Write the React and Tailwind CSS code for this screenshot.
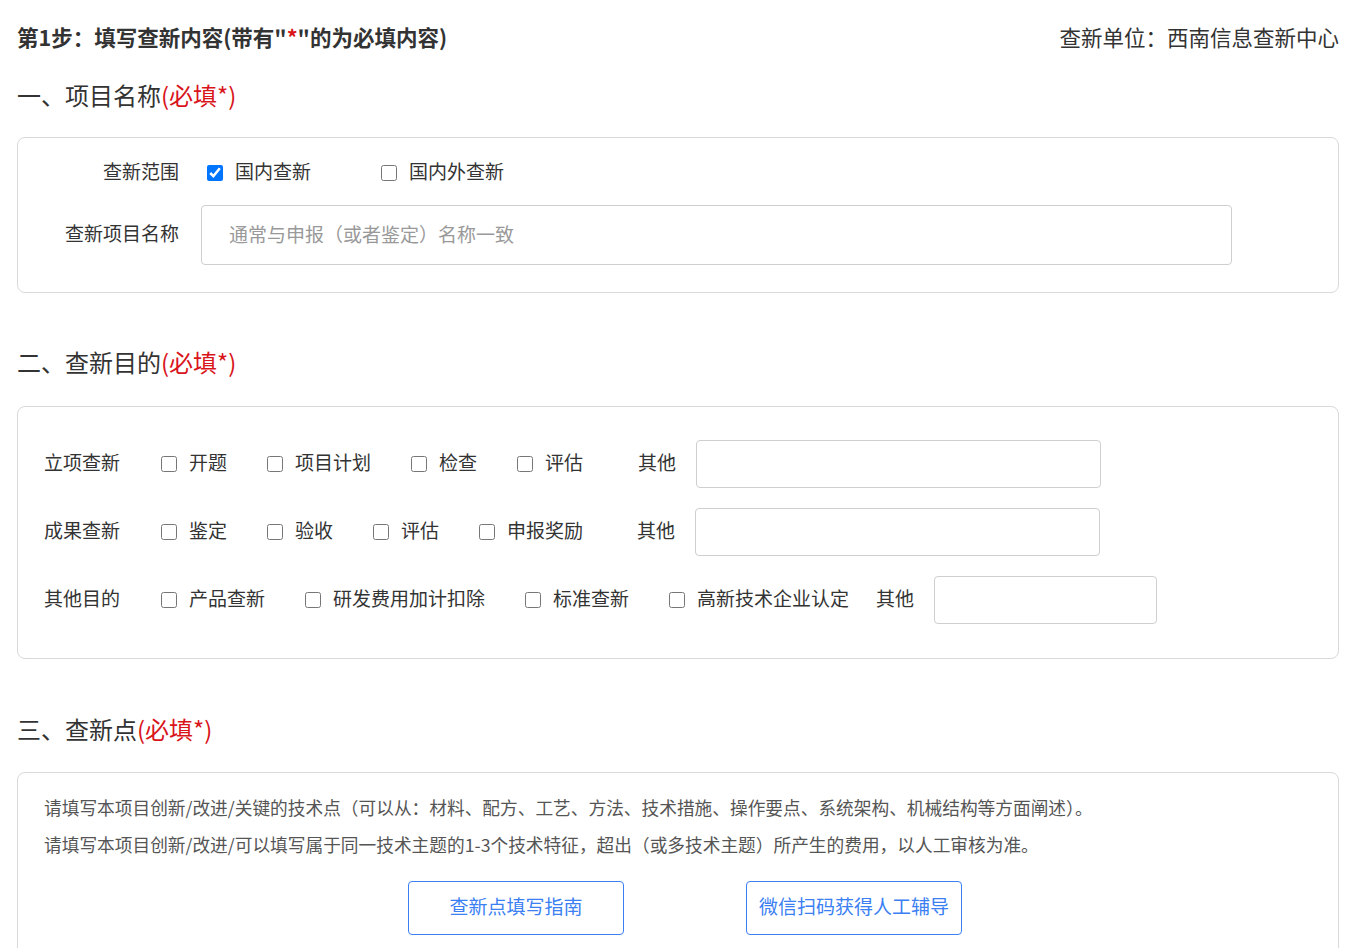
const font = { fontFamily: '"Noto Sans CJK SC", "Noto Sans", sans-serif' }

const Check = ({ label, checked, className = '' }) => (
  <label className={`flex items-center ${className}`}>
    <input type="checkbox" defaultChecked={checked} className="w-4 h-4 accent-[#0075ff]" />
    <span className="ml-[12px] pb-[3px] whitespace-nowrap">{label}</span>
  </label>
)

const SectionTitle = ({ children, className = '' }) => (
  <div className={`h-[36px] flex items-center pb-[3px] text-[24px] text-[#333] ${className}`}>
    {children}
    <span className="text-[#d9141a]">(必填*)</span>
  </div>
)

const purposeRows = [
  { label: '立项查新', items: ['开题', '项目计划', '检查', '评估'], otherGap: 'ml-[55px]', inputW: 'w-[405px]' },
  { label: '成果查新', items: ['鉴定', '验收', '评估', '申报奖励'], otherGap: 'ml-[54px]', inputW: 'w-[405px]' },
  { label: '其他目的', items: ['产品查新', '研发费用加计扣除', '标准查新', '高新技术企业认定'], otherGap: 'ml-[27px]', inputW: 'w-[223px]' },
]

export default function App() {
  return (
    <div className="min-h-[948px] bg-white pl-[17px] pr-[13px] pb-10 text-[#333]" style={font}>
      {/* header */}
      <div className="mt-[22px] h-[30px] flex items-center justify-between">
        <div className="text-[21.5px] font-bold text-[#333]">
          第1步：填写查新内容(带有"<span className="text-[#d9141a]">*</span>"的为必填内容)
        </div>
        <div className="text-[21.5px] text-[#333]">查新单位：西南信息查新中心</div>
      </div>

      <SectionTitle className="mt-[26px]">一、项目名称</SectionTitle>
      <div className="mt-[23px] border border-[#d9d9d9] rounded-[8px] pt-[15px] pb-[27px] text-[19px]">
        <div className="h-[40px] flex items-center">
          <div className="w-[161px] text-right pb-[3px]">查新范围</div>
          <Check label="国内查新" checked className="ml-[28px]" />
          <Check label="国内外查新" className="ml-[70px]" />
        </div>
        <div className="mt-[12px] flex items-center">
          <div className="w-[161px] text-right pb-[3px]">查新项目名称</div>
          <input
            type="text"
            placeholder="通常与申报（或者鉴定）名称一致"
            className="ml-[22px] w-[1031px] h-[60px] border border-[#cfcfcf] rounded-[4px] px-[27px] pb-[3px] text-[19px] outline-none placeholder:text-[#999]"
          />
        </div>
      </div>

      <SectionTitle className="mt-[52px]">二、查新目的</SectionTitle>
      <div className="mt-[25px] border border-[#d9d9d9] rounded-[8px] pt-[33px] pb-[34px] pl-[26px] text-[19px]">
        <div className="flex flex-col gap-[20px]">
          {purposeRows.map((row) => (
            <div key={row.label} className="flex items-center">
              <div className="w-[117px] pb-[3px]">{row.label}</div>
              <div className="flex items-center gap-[40px]">
                {row.items.map((it) => (
                  <Check key={it} label={it} />
                ))}
              </div>
              <div className={`${row.otherGap} pb-[3px]`}>其他</div>
              <input type="text" className={`ml-[20px] ${row.inputW} h-[48px] border border-[#cfcfcf] rounded-[4px] outline-none`} />
            </div>
          ))}
        </div>
      </div>

      <SectionTitle className="mt-[53px]">三、查新点</SectionTitle>
      <div className="mt-[24px] border border-[#d9d9d9] rounded-[8px] pt-[21px] pb-[30px] pl-[26px] text-[17.7px] text-[#555]">
        <div className="h-[28px] flex items-center pb-[2px] whitespace-nowrap">
          请填写本项目创新/改进/关键的技术点（可以从：材料、配方、工艺、方法、技术措施、操作要点、系统架构、机械结构等方面阐述）。
        </div>
        <div className="mt-[9px] h-[28px] flex items-center pb-[2px] whitespace-nowrap">
          请填写本项目创新/改进/可以填写属于同一技术主题的1-3个技术特征，超出（或多技术主题）所产生的费用，以人工审核为准。
        </div>
        <div className="mt-[22px] flex items-center pl-[364px] gap-[122px]">
          <button className="w-[216px] h-[54px] pb-[3px] border border-[#3b7ff2] rounded-[4px] text-[19px] text-[#3b7ff2] bg-white">
            查新点填写指南
          </button>
          <button className="w-[216px] h-[54px] pb-[3px] border border-[#3b7ff2] rounded-[4px] text-[19px] text-[#3b7ff2] bg-white">
            微信扫码获得人工辅导
          </button>
        </div>
      </div>
    </div>
  )
}
